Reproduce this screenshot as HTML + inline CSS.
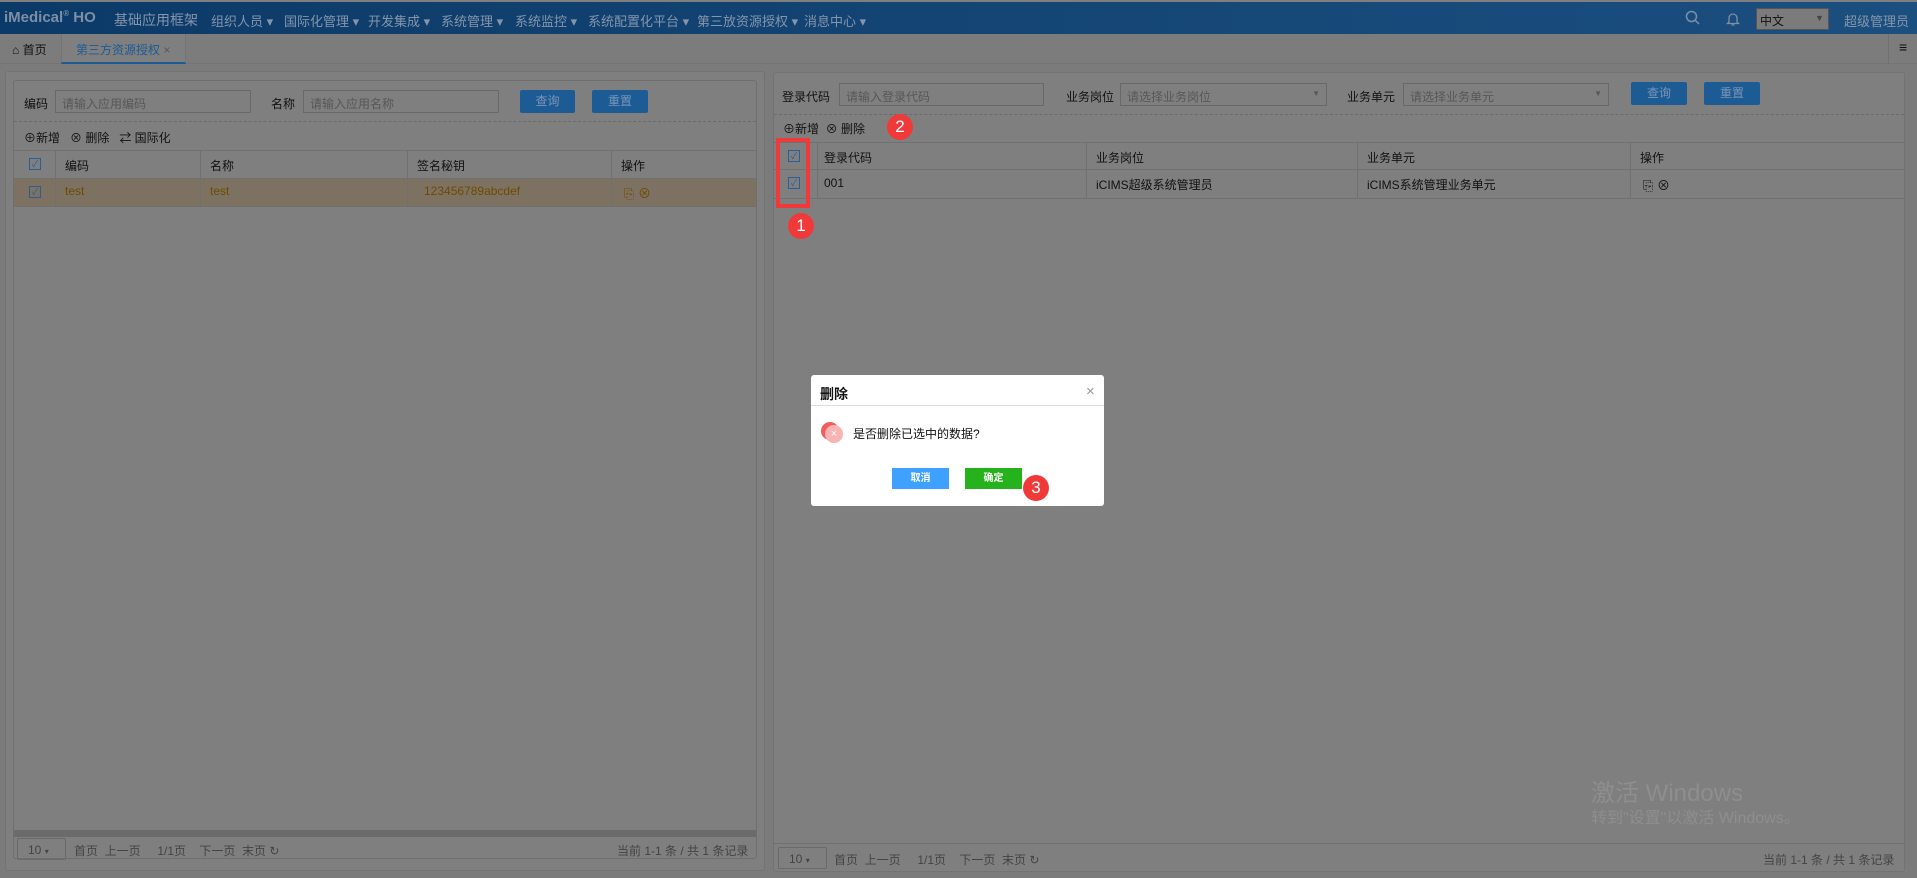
<!DOCTYPE html>
<html><head><meta charset="utf-8"><style>
*{box-sizing:border-box;margin:0;padding:0}
body{width:1917px;height:878px;background:#7b7b7b;font-family:"Liberation Sans","Noto Sans CJK SC",sans-serif;font-size:12px;color:#111;position:relative;overflow:hidden}
.a{position:absolute}
.nav{left:0;top:2px;width:1917px;height:32px;background:linear-gradient(90deg,#0c3a68,#1b4f80)}
.nav span{position:absolute;top:9px;color:#8595aa;font-size:13px;white-space:nowrap}
.tabs{left:0;top:34px;width:1917px;height:30px;background:#7c7c7c;border-bottom:1px solid #747474}
.panel{background:#7f7f7f;border:1px solid #737373;border-radius:3px}
.inp{position:absolute;height:23px;border:1px solid #686868;background:#7f7f7f;color:#575757;padding:4px 6px;font-size:12px}
.btn{position:absolute;height:23px;background:#1d5b95;color:#7b96b5;text-align:center;line-height:23px;font-size:12px;border-radius:2px}
.dash{position:absolute;height:0;border-top:1px dashed #6b6b6b}
.t{position:absolute;white-space:nowrap}
.cb{position:absolute;width:12px;height:12px;border:1px solid #2a5f96;color:#2a5f96;font-size:9px;line-height:10px;text-align:center}
.hl{position:absolute;background:#707070;height:1px}
.vl{position:absolute;background:#707070;width:1px}
.badge{position:absolute;width:26px;height:26px;border-radius:50%;background:#f03a3a;color:#fff;font-size:17px;text-align:center;line-height:26px}
</style></head><body>
<div class="a" style="left:0;top:0;width:1917px;height:2px;background:#7f7f7f"></div>
<div class="a nav">
<span style="left:4px;top:7px;font-weight:bold;font-size:15px;color:#7d8fa5">iMedical<sup style="font-size:8px">®</sup> HO</span>
<span style="left:114px;font-size:14px;top:8px">基础应用框架</span>
<span style="left:211px">组织人员 ▾</span>
<span style="left:284px">国际化管理 ▾</span>
<span style="left:368px">开发集成 ▾</span>
<span style="left:441px">系统管理 ▾</span>
<span style="left:515px">系统监控 ▾</span>
<span style="left:588px">系统配置化平台 ▾</span>
<span style="left:697px">第三放资源授权 ▾</span>
<span style="left:804px">消息中心 ▾</span>
<svg class="a" style="left:1685px;top:8px" width="16" height="16" viewBox="0 0 16 16"><circle cx="6.5" cy="6.5" r="5" fill="none" stroke="#7d8fa5" stroke-width="1.5"/><path d="M10 10l4 4" stroke="#7d8fa5" stroke-width="1.5"/></svg>
<svg class="a" style="left:1726px;top:9px" width="14" height="16" viewBox="0 0 14 16"><path d="M3 11V7a4 4 0 0 1 8 0v4l1.5 1.5h-11z M5.5 14h3" fill="none" stroke="#7d8fa5" stroke-width="1.3"/></svg>
<div class="a" style="left:1756px;top:6px;width:73px;height:22px;background:#7b7b7b;border:1px solid #555"><span style="left:3px;top:3px;color:#111;font-size:12px">中文</span><span style="left:58px;top:4px;color:#444;font-size:9px">▼</span></div>
<span style="left:1844px">超级管理员</span>
</div>
<div class="a tabs">
<span class="t" style="left:12px;top:7px;font-size:12px">⌂ 首页</span>
<div class="a" style="left:61px;top:0;width:125px;height:30px;background:#7f7f7f;border-bottom:2px solid #1d5b95;border-left:1px solid #747474;border-right:1px solid #747474"><span class="t" style="left:14px;top:7px;color:#1d5b95;font-size:12px">第三方资源授权 <span style="color:#556">×</span></span></div>
<div class="a" style="left:1888px;top:0;width:1px;height:30px;background:#707070"></div>
<span class="t" style="left:1899px;top:5px;font-size:14px;font-weight:bold">≡</span>
</div>

<!-- left panel -->
<div class="a panel" style="left:5px;top:71px;width:760px;height:800px"></div>
<div class="a panel" style="left:13px;top:80px;width:744px;height:779px;border-color:#6f6f6f"></div>
<span class="t" style="left:24px;top:95px">编码</span>
<div class="inp" style="left:55px;top:90px;width:196px">请输入应用编码</div>
<span class="t" style="left:271px;top:95px">名称</span>
<div class="inp" style="left:303px;top:90px;width:196px">请输入应用名称</div>
<div class="btn" style="left:520px;top:90px;width:55px">查询</div>
<div class="btn" style="left:592px;top:90px;width:56px">重置</div>
<div class="dash" style="left:14px;top:121px;width:742px"></div>
<span class="t" style="left:24px;top:129px">⊕新增 &nbsp;&nbsp;⊗ 删除 &nbsp;&nbsp;⇄ 国际化</span>
<div class="hl" style="left:14px;top:150px;width:742px"></div>
<div class="a" style="left:14px;top:178px;width:742px;height:28px;background:#7d7262"></div>
<div class="hl" style="left:14px;top:178px;width:742px"></div>
<div class="hl" style="left:14px;top:206px;width:742px"></div>
<div class="vl" style="left:55px;top:150px;height:56px"></div>
<div class="vl" style="left:200px;top:150px;height:56px"></div>
<div class="vl" style="left:407px;top:150px;height:56px"></div>
<div class="vl" style="left:611px;top:150px;height:56px"></div>
<div class="cb" style="left:29px;top:158px">✓</div>
<div class="cb" style="left:29px;top:186px">✓</div>
<span class="t" style="left:65px;top:157px">编码</span><span class="t" style="left:210px;top:157px">名称</span><span class="t" style="left:417px;top:157px">签名秘钥</span><span class="t" style="left:621px;top:157px">操作</span>
<span class="t" style="left:65px;top:184px;color:#6e4a00">test</span><span class="t" style="left:210px;top:184px;color:#6e4a00">test</span><span class="t" style="left:424px;top:184px;color:#6e4a00">123456789abcdef</span><span class="t" style="left:624px;top:183px;color:#6e4a00;font-size:13px">⎘ ⊗</span>
<div class="a" style="left:14px;top:830px;width:742px;height:7px;background:#6b6b6b"></div>
<div class="a" style="left:17px;top:838px;width:49px;height:22px;border:1px solid #6a6a6a;border-radius:2px"><span class="t" style="left:10px;top:4px;color:#444">10 <span style="font-size:8px">▾</span></span></div>
<span class="t" style="left:74px;top:842px;color:#444">首页 &nbsp;上一页 &nbsp;&nbsp;&nbsp;&nbsp;1/1页 &nbsp;&nbsp;&nbsp;下一页 &nbsp;末页 ↻</span>
<span class="t" style="left:617px;top:842px;color:#444">当前 1-1 条 / 共 1 条记录</span>

<!-- right panel -->
<div class="a panel" style="left:773px;top:72px;width:1132px;height:800px"></div>
<span class="t" style="left:782px;top:88px">登录代码</span>
<div class="inp" style="left:839px;top:83px;width:205px">请输入登录代码</div>
<span class="t" style="left:1066px;top:88px">业务岗位</span>
<div class="inp" style="left:1120px;top:83px;width:207px">请选择业务岗位<span class="t" style="right:6px;top:5px;font-size:8px">▼</span></div>
<span class="t" style="left:1347px;top:88px">业务单元</span>
<div class="inp" style="left:1403px;top:83px;width:206px">请选择业务单元<span class="t" style="right:6px;top:5px;font-size:8px">▼</span></div>
<div class="btn" style="left:1631px;top:82px;width:56px">查询</div>
<div class="btn" style="left:1704px;top:82px;width:56px">重置</div>
<div class="dash" style="left:774px;top:114px;width:1130px"></div>
<span class="t" style="left:783px;top:120px">⊕新增 &nbsp;⊗ 删除</span>
<div class="hl" style="left:774px;top:142px;width:1130px"></div>
<div class="hl" style="left:774px;top:169px;width:1130px"></div>
<div class="hl" style="left:774px;top:198px;width:1130px"></div>
<div class="vl" style="left:817px;top:142px;height:56px"></div>
<div class="vl" style="left:1086px;top:142px;height:56px"></div>
<div class="vl" style="left:1357px;top:142px;height:56px"></div>
<div class="vl" style="left:1630px;top:142px;height:56px"></div>
<div class="cb" style="left:788px;top:150px">✓</div>
<div class="cb" style="left:788px;top:177px">✓</div>
<span class="t" style="left:824px;top:149px">登录代码</span><span class="t" style="left:1096px;top:149px">业务岗位</span><span class="t" style="left:1367px;top:149px">业务单元</span><span class="t" style="left:1640px;top:149px">操作</span>
<span class="t" style="left:824px;top:176px">001</span><span class="t" style="left:1096px;top:176px">iCIMS超级系统管理员</span><span class="t" style="left:1367px;top:176px">iCIMS系统管理业务单元</span><span class="t" style="left:1643px;top:175px;font-size:13px">⎘ ⊗</span>
<div class="a" style="left:776px;top:138px;width:34px;height:70px;border:4px solid #f03a3a"></div>
<div class="badge" style="left:788px;top:213px">1</div>
<div class="badge" style="left:887px;top:114px">2</div>
<span class="t" style="left:1591px;top:773px;font-size:24px;color:#8e8e8e">激活 Windows</span>
<span class="t" style="left:1591px;top:804px;font-size:16px;color:#8e8e8e">转到"设置"以激活 Windows。</span>
<div class="hl" style="left:774px;top:843px;width:1130px"></div>
<div class="a" style="left:778px;top:847px;width:49px;height:22px;border:1px solid #6a6a6a;border-radius:2px"><span class="t" style="left:10px;top:4px;color:#444">10 <span style="font-size:8px">▾</span></span></div>
<span class="t" style="left:834px;top:851px;color:#444">首页 &nbsp;上一页 &nbsp;&nbsp;&nbsp;&nbsp;1/1页 &nbsp;&nbsp;&nbsp;下一页 &nbsp;末页 ↻</span>
<span class="t" style="left:1763px;top:851px;color:#444">当前 1-1 条 / 共 1 条记录</span>

<!-- dialog -->
<div class="a" style="left:811px;top:375px;width:293px;height:131px;background:#fff;border-radius:3px">
<span class="t" style="left:9px;top:9px;font-size:14px;font-weight:bold;color:#111">删除</span>
<span class="t" style="left:275px;top:8px;font-size:15px;color:#999">×</span>
<div class="a" style="left:0;top:30px;width:293px;height:1px;background:#ddd"></div>
<div class="a" style="left:10px;top:47px;width:18px;height:18px;border-radius:50%;background:#f25c5c"></div>
<div class="a" style="left:14px;top:50px;width:18px;height:18px;border-radius:50%;background:#f8b4b4;color:#fff;font-size:11px;text-align:center;line-height:18px">×</div>
<span class="t" style="left:42px;top:50px;font-size:12px;color:#111">是否删除已选中的数据?</span>
<div class="a" style="left:81px;top:93px;width:57px;height:21px;background:#3ea0ff;color:#fff;text-align:center;line-height:21px;font-size:10px;font-weight:bold">取消</div>
<div class="a" style="left:154px;top:93px;width:57px;height:21px;background:#25b21c;color:#fff;text-align:center;line-height:21px;font-size:10px;font-weight:bold">确定</div>
</div>
<div class="badge" style="left:1023px;top:475px">3</div>
</body></html>
